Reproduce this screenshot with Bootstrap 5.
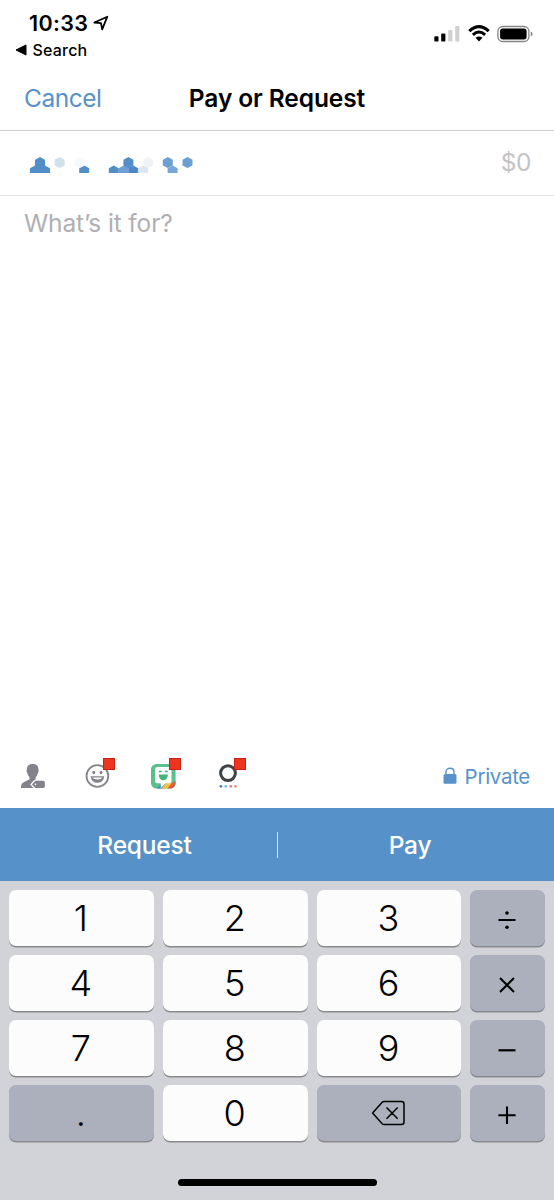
<!DOCTYPE html>
<html lang="en">
<head>
<meta charset="utf-8">
<meta name="viewport" content="width=device-width, initial-scale=1">
<title>Pay or Request</title>
<link href="https://cdn.jsdelivr.net/npm/bootstrap@5.3.0/dist/css/bootstrap.min.css" rel="stylesheet">
<style>
  body { font-family: Inter, "Liberation Sans", sans-serif; color: #000; background: #fff; line-height: 1; }
  svg { display: block; flex: none; }
  .screen { height: 1200px; overflow: hidden; }
  .blue { color: #5793c9; }
  .status { height: 66px; padding: 12px 21px 0 15px; }
  .clock { font-size: 21.5px; font-weight: 600; line-height: 22px; padding-left: 14px; letter-spacing: .35px; }
  .clock svg { margin-left: 5px; }
  .back-app { font-size: 16px; font-weight: 500; line-height: 18px; margin-top: 7px; letter-spacing: .2px; }
  .back-app span { margin-left: 5.5px; }
  .signals { padding-top: 13px; }
  .signals .battery { margin-left: 7px; }
  .titlebar { height: 65px; border-bottom: 1px solid #cfcfd1; grid-template-columns: 1fr auto 1fr; padding: 0 24px; font-size: 24.5px; }
  .titlebar h1 { font-size: 24.5px; font-weight: 600; line-height: 1; letter-spacing: -.1px; }
  .cancel { letter-spacing: -.5px; }
  .payee { height: 65px; border-bottom: 1px solid #e3e3e5; padding: 0 23px 0 29px; }
  .amount { font-size: 24.5px; font-weight: 400; color: #c3c3c5; letter-spacing: -.5px; margin-bottom: 2px; }
  .note { font-size: 24.5px; font-weight: 400; color: #b0b0b2; padding: 15px 24px; letter-spacing: -.12px; }
  .tools { height: 64px; padding: 0 24px 0 20px; }
  .tool-set { gap: 38.3px; }
  .tool { position: relative; width: 27px; height: 28px; }
  .alert-dot { position: absolute; left: 18px; top: -4px; width: 12px; height: 12px; background: #f03422; border: 1px solid #c92014; }
  .privacy { font-size: 20.5px; letter-spacing: -.3px; }
  .privacy svg { margin-right: 8px; margin-bottom: 1px; }
  .privacy span { margin-top: 2px; }
  .actions { height: 73px; background: #5692c9; font-size: 24.5px; font-weight: 500; color: #fff; }
  .actions .act { letter-spacing: -.2px; background: none; border: 0; color: inherit; font-weight: inherit; padding: 2px 0 0; }
  .act-first { width: 277px; }
  .actions .act-first { padding-left: 12px; }
  .act-second { width: 264px; }
  .split { width: 1px; height: 26px; background: #d7e6f4; }
  .keyboard { height: 319px; background: #d2d3d9; padding: 9px 8.5px 0 9px; }
  .keys { grid-template-columns: 144.8px 144.8px 144.8px 75px; grid-auto-rows: 56px; gap: 9px; }
  .key { border: 0; border-radius: 7px; background: #fcfcfc; box-shadow: 0 1.5px 0 #898a8e; font-size: 36px; font-weight: 300; color: #000; padding: 0 1px 1px 0; line-height: 1; }
  .key-dim { background: #abb0bc; }
  .operator svg { margin-top: 4px; }
  .delete { padding-left: 2px; }
  .home-bar { width: 199px; height: 7px; border-radius: 4px; background: #000; margin-top: 38px; }
</style>
</head>
<body>
<main class="screen d-flex flex-column">
  <header class="status d-flex justify-content-between align-items-start">
    <div>
      <div class="clock d-flex align-items-center"><span>10:33</span>
        <svg width="16" height="16" viewBox="0 0 16 16"><path d="M1.4 7.5 14.3 1.7 9.2 14.3 8 8.1Z" fill="none" stroke="#000" stroke-width="1.8" stroke-linejoin="round"/></svg>
      </div>
      <div class="back-app d-flex align-items-center"><svg width="12" height="12" viewBox="0 0 12 12"><path d="M1 6 11 1V11Z" stroke="#000" stroke-linejoin="round"/></svg><span>Search</span></div>
    </div>
    <div class="signals d-flex align-items-center">
      <svg width="26" height="18" viewBox="0 0 26 18"><rect x=".3" y="11.2" width="4.2" height="5.4" rx="1.2"/><rect x="7.2" y="8.4" width="4.2" height="8.2" rx="1.2"/><g fill="#d0d0d1"><rect x="14.2" y="5" width="4.2" height="11.6" rx="1.2"/><rect x="21.2" y="1" width="4.2" height="15.6" rx="1.2"/></g></svg>
      <svg class="ms-2" width="22" height="18" viewBox="0 0 22 18"><path d="M1.3 6.2Q11-2.8 20.7 6.2M4.9 9.8Q11 4.2 17.1 9.8" fill="none" stroke="#000" stroke-width="3.1"/><path d="M7.5 12.8Q11 10.2 14.5 12.8L11 16.6Z"/></svg>
      <svg class="battery" width="36" height="18" viewBox="0 0 36 18"><rect x=".9" y="1.5" width="31" height="15" rx="4.8" fill="none" stroke="#858587" stroke-width="1.3"/><rect x="3.1" y="3.6" width="26.5" height="10.8" rx="2.6"/><path d="M33.8 6.5Q35.6 7.2 35.6 9T33.8 11.5Z" fill="#858587"/></svg>
    </div>
  </header>

  <nav class="titlebar d-grid align-items-center">
    <span class="cancel blue">Cancel</span>
    <h1 class="m-0">Pay or Request</h1>
  </nav>

  <section class="payee d-flex align-items-center justify-content-between">
    <svg width="170" height="19" viewBox="29 153.6 170 19">
      <defs><path id="hex" d="M0-5.5 5-2.8V2.8L0 5.5-5 2.8V-2.8Z"/><path id="half" d="M0-4.8 5-2V2.8H-5V-2Z"/></defs>
      <g fill="#528fc8"><use href="#half" x="35" y="169.8"/><use href="#half" x="45" y="169.8"/><path d="M35 164H45V172H35Z"/><use href="#hex" x="40" y="162.2"/><use href="#half" x="84.2" y="169.8"/><use href="#half" x="113.8" y="169.8"/></g>
      <use href="#hex" x="59.6" y="162.2" fill="#cfe0ef"/>
      <use href="#hex" x="79.5" y="162.2" fill="#f7f9fc"/>
      <use href="#half" x="133.2" y="169.8" fill="#4d86cb"/><path d="M124 164H133V167.5H124Z" fill="#528fc8"/><use href="#hex" x="128.4" y="162.2" fill="#528fc8"/><use href="#half" x="123.6" y="169.8" fill="#6f9fd6"/>
      <use href="#hex" x="148.2" y="162.2" fill="#f0f4f9"/><use href="#half" x="143.2" y="169.8" fill="#dbe7f2"/>
      <use href="#half" x="172.6" y="169.8" fill="#76a7d8"/><use href="#hex" x="167.8" y="162.2" fill="#6c9fd3"/><use href="#hex" x="187.5" y="162.2" fill="#6c9fd3"/>
    </svg>
    <span class="amount">$0</span>
  </section>

  <section class="note flex-grow-1">What’s it for?</section>

  <section class="tools d-flex align-items-center justify-content-between">
    <div class="tool-set d-flex">
      <div class="tool"><svg width="27" height="28" viewBox="0 0 27 28"><path d="M7 7C7 3.8 9.2 2 12.7 2S18.4 3.8 18.4 7.2Q19.8 9.5 17.7 11.5 17 14 15.7 15V17.2L13.5 18.8 10.2 22.4 13.5 26H1Q.8 21.8 3.3 20.5L9.5 17.3V15Q8 13.8 7.5 11.5 5.5 9.4 7 7Z" fill="#83838c"/><path d="M15.3 18.8H23.2Q24.8 18.8 24.8 20.4V24.4Q24.8 26 23.2 26H15.3L11.9 22.4Z" fill="#83838c"/><circle cx="15.4" cy="22.4" r=".8" fill="#fff"/></svg></div>
      <div class="tool"><svg width="27" height="28" viewBox="0 0 27 28"><circle cx="12.4" cy="14" r="10.9" fill="none" stroke="#84848a" stroke-width="1.8"/><ellipse cx="8.8" cy="10.5" rx="1.5" ry="1.8" fill="#84848a"/><ellipse cx="16" cy="10.5" rx="1.5" ry="1.8" fill="#84848a"/><path d="M5.5 14.2H19.3Q18.4 20.8 12.4 20.8T5.5 14.2Z" fill="#84848a"/><path d="M7.2 15.4H17.6Q15.7 17.4 12.4 17.4T7.2 15.4Z" fill="#fff"/></svg><span class="alert-dot"></span></div>
      <div class="tool"><svg width="27" height="28" viewBox="0 0 27 28"><defs><clipPath id="tile"><rect x="0" y="2" width="24.6" height="24.5" rx="5.5"/></clipPath></defs><g clip-path="url(#tile)"><path fill="#5bc08c" d="M0 2H25V27H0Z"/><path fill="#4a8ec9" d="M5 27 10 22H17L12 27Z"/><path fill="#f5c344" d="M10 27 15 21H21L17 27Z"/><path fill="#e35a3c" d="M16 27 21 21 25 19V27Z"/><path fill="#fff" d="M6.5 5H18Q20.5 5 20.5 7.5V18.8Q20.5 21.3 18 21.3H14.6L9.8 26V21.3H6.5Q4 21.3 4 18.8V7.5Q4 5 6.5 5Z"/></g><path d="M8 10Q9.3 8.6 10.5 10M14.2 10Q15.4 8.6 16.7 10" stroke="#46b47d" stroke-width="1.5" fill="none"/><path d="M7.7 12.5H17Q16.5 18.3 12.3 18.3T7.7 12.5Z" fill="#46b47d"/></svg><span class="alert-dot"></span></div>
      <div class="tool"><svg width="27" height="28" viewBox="0 0 27 28"><circle cx="12" cy="11.1" r="7.4" fill="none" stroke="#3f4246" stroke-width="3"/><circle cx="4.9" cy="24.3" r="1.4" fill="#5779ad"/><circle cx="9.8" cy="24.3" r="1.4" fill="#79bbd3"/><circle cx="14.8" cy="24.3" r="1.4" fill="#e17d86"/><circle cx="19.4" cy="24.3" r="1.4" fill="#ef9178"/></svg><span class="alert-dot"></span></div>
    </div>
    <div class="privacy blue d-flex align-items-center">
      <svg width="14" height="18" viewBox="0 0 14 18"><path d="M3 8V4.8C3 2.6 4.7 1.2 7 1.2S11 2.6 11 4.8V8" fill="none" stroke="#5793c9" stroke-width="1.4"/><rect x=".5" y="7" width="13" height="9.8" rx="1.5" fill="#5793c9"/></svg>
      <span>Private</span>
    </div>
  </section>

  <section class="actions d-flex align-items-center">
    <button class="act act-first" type="button">Request</button>
    <span class="split"></span>
    <button class="act act-second" type="button">Pay</button>
  </section>

  <section class="keyboard">
    <div class="keys d-grid">
      <button class="key">1</button><button class="key">2</button><button class="key">3</button>
      <button class="key key-dim operator" aria-label="divide"><svg class="mx-auto" width="18" height="20" viewBox="0 0 18 20"><path d="M.5 10H17.5" stroke="#000" stroke-width="2"/><circle cx="9" cy="3" r="1.8"/><circle cx="9" cy="17.2" r="1.8"/></svg></button>
      <button class="key">4</button><button class="key">5</button><button class="key">6</button>
      <button class="key key-dim operator" aria-label="multiply"><svg class="mx-auto" width="18" height="20" viewBox="0 0 18 20"><path d="M2 3 16 17M16 3 2 17" stroke="#000" stroke-width="2"/></svg></button>
      <button class="key">7</button><button class="key">8</button><button class="key">9</button>
      <button class="key key-dim operator" aria-label="subtract"><svg class="mx-auto" width="18" height="20" viewBox="0 0 18 20"><path d="M.5 10.3H17.5" stroke="#000" stroke-width="2.2"/></svg></button>
      <button class="key key-dim">.</button><button class="key">0</button>
      <button class="key key-dim delete" aria-label="delete"><svg class="mx-auto" width="34" height="26" viewBox="0 0 34 26"><path d="M12 1.5H29.5Q32 1.5 32 4V22Q32 24.5 29.5 24.5H12Q11 24.5 10.2 23.7L1 13.6Q.5 13 1 12.4L10.2 2.3Q11 1.5 12 1.5ZM14.5 7.5 25.7 18.7M25.7 7.5 14.5 18.7" fill="none" stroke="#000" stroke-width="1.5"/></svg></button>
      <button class="key key-dim operator" aria-label="add"><svg class="mx-auto" width="18" height="20" viewBox="0 0 18 20"><path d="M.4 10.2H17.6M9 1.4V19" stroke="#000" stroke-width="2.1"/></svg></button>
    </div>
    <div class="home-bar mx-auto"></div>
  </section>
</main>
<script src="https://cdn.jsdelivr.net/npm/bootstrap@5.3.0/dist/js/bootstrap.bundle.min.js"></script>
</body>
</html>
